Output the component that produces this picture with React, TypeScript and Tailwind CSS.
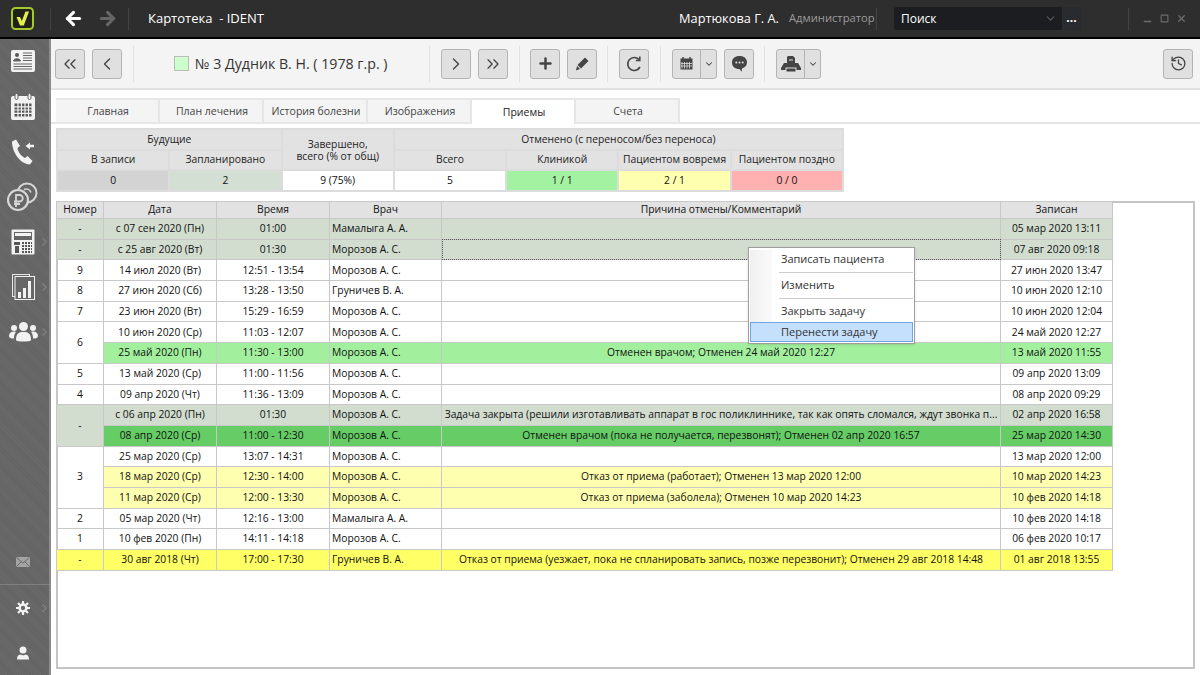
import { ChevronDown, ChevronLeft, ChevronRight, ChevronsLeft, ChevronsRight, Plus, History, ArrowLeft, ArrowRight, X, Minus, Square } from "lucide-react"
import type { ReactNode } from "react"

const Sep = ({ className = "" }: { className?: string }) => (
  <div className={"w-px h-9 bg-[#e2e2e2] shrink-0 " + className}></div>
)

const Btn = ({ children, className = "" }: { children: ReactNode; className?: string }) => (
  <div className={"w-[30px] h-[30px] shrink-0 flex items-center justify-center bg-[#e0e0e0] border border-[#b4b4b4] rounded-[3px] text-[#444] " + className}>
    {children}
  </div>
)

const SplitBtn = ({ children, className = "" }: { children: ReactNode; className?: string }) => (
  <div className={"w-[45px] h-[30px] shrink-0 flex bg-[#e0e0e0] border border-[#b4b4b4] rounded-[3px] text-[#444] " + className}>
    <div className="w-[28px] flex items-center justify-center border-r border-[#b4b4b4]">{children}</div>
    <div className="flex-1 flex items-center justify-center"><ChevronDown size={10} strokeWidth={2.5} /></div>
  </div>
)

const SideArrow = () => (
  <ChevronRight size={13} strokeWidth={3} className="absolute left-[38px] top-1/2 -translate-y-1/2 text-[#7c7c7c]" />
)

const SideItem = ({ children, arrow, className = "" }: { children: ReactNode; arrow?: boolean; className?: string }) => (
  <div className={"relative h-[45px] flex items-center justify-center pr-[3px] " + className}>
    {children}
    {arrow && <SideArrow />}
  </div>
)

const tabs = ["Главная", "План лечения", "История болезни", "Изображения", "Приемы", "Счета"]

type Row = {
  num?: string
  span?: number
  date: string
  time: string
  doc: string
  note?: string
  rec: string
  bg?: string
  focus?: boolean
}

const GREY = "bg-[#d2ddd0]"
const LGREEN = "bg-[#a2f09e]"
const DGREEN = "bg-[#66cc66]"
const LYEL = "bg-[#ffffb0]"
const YEL = "bg-[#ffff66]"

const rows: Row[] = [
  { num: "-", date: "с 07 сен 2020 (Пн)", time: "01:00", doc: "Мамалыга А. А.", rec: "05 мар 2020 13:11", bg: GREY },
  { num: "-", date: "с 25 авг 2020 (Вт)", time: "01:30", doc: "Морозов А. С.", rec: "07 авг 2020 09:18", bg: GREY, focus: true },
  { num: "9", date: "14 июл 2020 (Вт)", time: "12:51 - 13:54", doc: "Морозов А. С.", rec: "27 июн 2020 13:47" },
  { num: "8", date: "27 июн 2020 (Сб)", time: "13:28 - 13:50", doc: "Груничев В. А.", rec: "10 июн 2020 12:10" },
  { num: "7", date: "23 июн 2020 (Вт)", time: "15:29 - 16:59", doc: "Морозов А. С.", rec: "10 июн 2020 12:04" },
  { num: "6", span: 2, date: "10 июн 2020 (Ср)", time: "11:03 - 12:07", doc: "Морозов А. С.", rec: "24 май 2020 12:27" },
  { date: "25 май 2020 (Пн)", time: "11:30 - 13:00", doc: "Морозов А. С.", note: "Отменен врачом; Отменен 24 май 2020 12:27", rec: "13 май 2020 11:55", bg: LGREEN },
  { num: "5", date: "13 май 2020 (Ср)", time: "11:00 - 11:56", doc: "Морозов А. С.", rec: "09 апр 2020 13:09" },
  { num: "4", date: "09 апр 2020 (Чт)", time: "11:36 - 13:09", doc: "Морозов А. С.", rec: "08 апр 2020 09:29" },
  { num: "-", span: 2, date: "с 06 апр 2020 (Пн)", time: "01:30", doc: "Морозов А. С.", note: "Задача закрыта (решили изготавливать аппарат в гос поликлиннике, так как опять сломался, ждут звонка п...", rec: "02 апр 2020 16:58", bg: GREY },
  { date: "08 апр 2020 (Ср)", time: "11:00 - 12:30", doc: "Морозов А. С.", note: "Отменен врачом (пока не получается, перезвонят); Отменен 02 апр 2020 16:57", rec: "25 мар 2020 14:30", bg: DGREEN },
  { num: "3", span: 3, date: "25 мар 2020 (Ср)", time: "13:07 - 14:31", doc: "Морозов А. С.", rec: "13 мар 2020 12:00" },
  { date: "18 мар 2020 (Ср)", time: "12:30 - 14:00", doc: "Морозов А. С.", note: "Отказ от приема (работает); Отменен 13 мар 2020 12:00", rec: "10 мар 2020 14:23", bg: LYEL },
  { date: "11 мар 2020 (Ср)", time: "12:00 - 13:30", doc: "Морозов А. С.", note: "Отказ от приема (заболела); Отменен 10 мар 2020 14:23", rec: "10 фев 2020 14:18", bg: LYEL },
  { num: "2", date: "05 мар 2020 (Чт)", time: "12:16 - 13:00", doc: "Мамалыга А. А.", rec: "10 фев 2020 14:18" },
  { num: "1", date: "10 фев 2020 (Пн)", time: "14:11 - 14:18", doc: "Морозов А. С.", rec: "06 фев 2020 10:17" },
  { num: "-", date: "30 авг 2018 (Чт)", time: "17:00 - 17:30", doc: "Груничев В. А.", note: "Отказ от приема (уезжает, пока не спланировать запись, позже перезвонит); Отменен 29 авг 2018 14:48", rec: "01 авг 2018 13:55", bg: YEL },
]

const th = "border border-[#c8c8c8] bg-[#e2e2e2] font-normal text-center px-0 text-[#111]"
const td = "border border-[#c8c8c8] text-center px-0 overflow-hidden whitespace-nowrap text-[#111]"
const st = "border-2 border-[#dcdcdc] bg-[#e2e2e2] font-normal text-center text-[#222]"
const sv = "border-2 border-[#dcdcdc] text-center text-[#111]"

export default function App() {
  return (
    <div className="w-[1200px] h-[675px] overflow-hidden flex flex-col bg-white text-[#222] font-['Open_Sans',sans-serif]">
      <header className="relative h-[39px] shrink-0 flex items-center bg-[#2e2e2e] border-b-2 border-black text-white">
        <div className="w-[50px] flex justify-center -translate-x-[3px]">
          <svg width="23" height="23" viewBox="0 0 23 23">
            <rect x="1" y="1" width="21" height="21" rx="3.500" fill="#20221a" stroke="#a5c82d" strokeWidth="2" />
            <path d="M5.500 10h3.500l1.800 4 3.700-9.500h3.500L12.800 18.500H9z" fill="#e4f04e" />
          </svg>
        </div>
        <div className="w-px h-[22px] bg-[#444]"></div>
        <ArrowLeft size={21} strokeWidth={3.5} className="ml-[12px] text-white" />
        <ArrowRight size={21} strokeWidth={3.5} className="ml-[13px] text-[#666]" />
        <div className="w-px h-[22px] bg-[#444] ml-[10px]"></div>
        <div className="ml-[19px] text-[13px]">Картотека&nbsp; - IDENT</div>
        <div className="ml-auto text-[12.800px] font-medium">Мартюкова Г. А.</div>
        <div className="ml-[10px] text-[11.200px] text-[#9c9c9c] w-[87px] whitespace-nowrap">Администратор</div>
        <div className="w-px h-[22px] bg-[#444]"></div>
        <div className="ml-[17px] w-[187px] h-[23px] flex rounded-[3px] bg-[#1c1d20]">
          <div className="flex-1 flex items-center justify-between pl-[7px] pr-[5px] text-[12px]">
            <span>Поиск</span>
            <ChevronDown size={13} className="text-[#5c5c5c]" />
          </div>
          <div className="w-[19px] bg-[#2a2b2e] rounded-r-[3px] text-[12px] font-bold text-center leading-[22px]">...</div>
        </div>
        <div className="w-px h-[22px] bg-[#444] ml-[47px]"></div>
        <div className="flex items-center gap-[7px] ml-[13px] mr-[13px] text-[#6c6c6c]">
          <Minus size={11} strokeWidth={3} className="translate-y-[3px]" />
          <Square size={9} strokeWidth={3} />
          <X size={11} strokeWidth={3} />
        </div>
      </header>

      <div className="flex-1 flex min-h-0">
        <aside className="w-[51px] shrink-0 flex flex-col bg-[repeating-linear-gradient(45deg,#6a6a6a_0px,#6a6a6a_1px,#636363_1px,#636363_2px)] border-r-2 border-[#8c8c8c]">
          <SideItem>
            <svg width="26" height="24" viewBox="0 0 26 24" className="-translate-y-[1px]">
              <rect x="1" y="1" width="24" height="22" rx="2" fill="#f2f2f2" />
              <circle cx="7" cy="6" r="2" fill="#555" />
              <path d="M3.5 12c0-3 7-3 7 0zM13 4h9M13 6.5h9M13 9h9M13 11.5h9M3.5 15h18.500M3.500 17.500h18.500M3.500 20h18.500" fill="#555" stroke="#666" strokeWidth="1" />
            </svg>
          </SideItem>
          <SideItem>
            <svg width="26" height="28" viewBox="0 0 26 28">
              <rect x="1" y="3" width="24" height="24" rx="2" fill="#f2f2f2" />
              <rect x="5" y="0.500" width="3" height="6" rx="1.500" fill="#f2f2f2" stroke="#666" />
              <rect x="18" y="0.500" width="3" height="6" rx="1.500" fill="#f2f2f2" stroke="#666" />
              <path d="M4.500 10.500h17v13h-17z" fill="#555" />
              <path d="M8 10v14M11.500 10v14M15 10v14M18.500 10v14M4 13.800h18M4 17h18M4 20.300h18" stroke="#f2f2f2" strokeWidth="1.200" />
            </svg>
          </SideItem>
          <SideItem>
            <svg width="24" height="26" viewBox="0 0 24 26">
              <path d="M1 2.500 5 0.500 9 7 6.500 9c.5 4 4 8.500 7.500 10l2.500-2 5 5-2.500 3.500C10 25.500 1 14 1 2.500z" fill="#f2f2f2" />
              <path d="M23 7h-5" stroke="#f2f2f2" strokeWidth="2.500" />
              <path d="M19 3.500 14.500 7l4.500 3.500z" fill="#f2f2f2" />
            </svg>
          </SideItem>
          <SideItem>
            <svg width="32" height="30" viewBox="0 0 32 30" fill="none" stroke="#d6d6d6">
              <circle cx="20" cy="11" r="9.500" strokeWidth="2" />
              <path d="M17 7.500a5 5 0 0 1 7 3" strokeWidth="1.500" />
              <circle cx="11" cy="18" r="10" fill="#676767" strokeWidth="2.200" />
              <path d="M9 25v-12h3.500a3 3 0 0 1 0 6.500H7M7 22h6" strokeWidth="1.800" />
            </svg>
          </SideItem>
          <SideItem arrow>
            <svg width="24" height="26" viewBox="0 0 24 26">
              <rect x="0.500" y="0.500" width="23" height="25" rx="1" fill="#f2f2f2" />
              <rect x="3" y="3" width="18" height="8" fill="#666" />
              <rect x="4" y="4" width="16" height="3" fill="#f2f2f2" />
              <rect x="3" y="13" width="6" height="3" fill="#555" />
              <rect x="4" y="17" width="4" height="7" fill="#555" />
              <path d="M11 14h10M11 17h10M11 20h10M11 23h10" stroke="#555" strokeWidth="2" strokeDasharray="2 1" />
            </svg>
          </SideItem>
          <SideItem arrow>
            <svg width="23" height="26" viewBox="0 0 23 26">
              <rect x="0.500" y="0.500" width="17" height="22" fill="none" stroke="#e8e8e8" />
              <rect x="3" y="2.500" width="19.500" height="23" fill="#676767" stroke="#f2f2f2" />
              <rect x="6" y="18" width="3" height="6" fill="#f2f2f2" />
              <rect x="11" y="14" width="3" height="10" fill="#f2f2f2" />
              <rect x="16" y="7" width="3" height="17" fill="#f2f2f2" />
            </svg>
          </SideItem>
          <SideItem arrow>
            <svg width="29" height="20" viewBox="0 0 29 20" fill="#f2f2f2">
              <circle cx="14.500" cy="4.500" r="4.500" />
              <circle cx="5" cy="6" r="3" />
              <circle cx="24" cy="6" r="3" />
              <path d="M7 18c0-7 3-8 7.500-8s7.500 1 7.500 8c0 2-15 2-15 0z" />
              <path d="M0 14c0-3 2-4.500 5-4.500 1 0 1.500.2 2 .5-1.500 1.500-2 3.500-2 6.500C2 16.500 0 16 0 14zM29 14c0-3-2-4.500-5-4.500-1 0-1.500.2-2 .5 1.500 1.500 2 3.500 2 6.500 3 0 5-.500 5-2.500z" />
            </svg>
          </SideItem>
          <SideItem className="mt-auto">
            <svg width="14" height="10" viewBox="0 0 14 10">
              <rect width="14" height="10" rx="1" fill="#a4a4a4" />
              <path d="M0.500 0.500 7 6l6.500-5.500M0.500 9.500 5 5M13.500 9.500 9 5" stroke="#676767" fill="none" />
            </svg>
          </SideItem>
          <div className="h-px bg-[#808080]"></div>
          <SideItem arrow>
            <svg width="14" height="14" viewBox="0 0 14 14">
              <circle cx="7" cy="7" r="3.400" fill="none" stroke="#f2f2f2" strokeWidth="2.500" />
              <path d="M7 0v3M7 11v3M0 7h3M11 7h3M2 2l2 2M10 10l2 2M12 2l-2 2M4 10l-2 2" stroke="#f2f2f2" strokeWidth="2.200" />
            </svg>
          </SideItem>
          <SideItem>
            <svg width="12" height="14" viewBox="0 0 12 14" fill="#f2f2f2">
              <circle cx="6" cy="4" r="3.500" />
              <path d="M0 13.500c0-3 1-4.500 3.500-5 .8 1 4.200 1 5 0 2.500.5 3.500 2 3.500 5z" />
            </svg>
          </SideItem>
        </aside>

        <main className="flex-1 min-w-0 flex flex-col">
          <div className="h-[51px] shrink-0 flex items-center pl-1 pr-[7px] bg-[#f4f4f4] border-b-2 border-[#e2e2e2]">
            <Btn><ChevronsLeft size={20} strokeWidth={1.600} /></Btn>
            <Btn className="ml-[7px]"><ChevronLeft size={20} strokeWidth={1.600} /></Btn>
            <Sep className="ml-[11px]" />
            <div className="w-[15px] h-[15px] ml-[40px] shrink-0 bg-[#ccffcc] border border-[#bbb]"></div>
            <div className="ml-[6px] w-[234px] text-[14.200px] text-[#333] whitespace-nowrap">№ 3 Дудник В. Н. ( 1978 г.р. )</div>
            <Sep />
            <Btn className="ml-[11px]"><ChevronRight size={20} strokeWidth={1.600} /></Btn>
            <Btn className="ml-[7px]"><ChevronsRight size={20} strokeWidth={1.600} /></Btn>
            <Sep className="ml-[11px]" />
            <Btn className="ml-[10px]"><Plus size={17} strokeWidth={3.500} /></Btn>
            <Btn className="ml-[7px]">
              <svg width="16" height="16" viewBox="0 0 16 16" fill="#444">
                <path d="M11 1.500 14.500 5 7 12.500 3.500 9z" />
                <path d="M3 10l3 3-4 1.500z" />
              </svg>
            </Btn>
            <Sep className="ml-[10px]" />
            <Btn className="ml-[11px]">
              <svg width="18" height="18" viewBox="0 0 18 18" fill="none" stroke="#444" strokeWidth="1.600">
                <path d="M14 4.500A6.500 6.500 0 1 0 15 12" />
                <path d="M14.800 1.500v4h-4" />
              </svg>
            </Btn>
            <Sep className="ml-[11px]" />
            <SplitBtn className="ml-[11px]">
              <svg width="13" height="13" viewBox="0 0 13 13">
                <rect x="0.500" y="1.500" width="12" height="11" fill="#444" />
                <path d="M3 0v3M10 0v3" stroke="#444" strokeWidth="1.500" />
                <path d="M2 5v6.500M4.500 5v6.500M7 5v6.500M9.500 5v6.500M1 6.500h11M1 9h11" stroke="#e0e0e0" strokeWidth="0.800" />
              </svg>
            </SplitBtn>
            <Btn className="ml-[7px]">
              <svg width="17" height="17" viewBox="0 0 17 17">
                <path d="M8.500 1C4 1 1 3.500 1 7.500S4 14 8 14c1 0 1.500 2 3 2.500-.300-1-.300-2 0-3 3-1 5-3 5-6C16 3.500 13 1 8.500 1z" fill="#444" />
                <circle cx="5.300" cy="7.500" r="1" fill="#e0e0e0" />
                <circle cx="8.500" cy="7.500" r="1" fill="#e0e0e0" />
                <circle cx="11.700" cy="7.500" r="1" fill="#e0e0e0" />
              </svg>
            </Btn>
            <Sep className="ml-[10px]" />
            <SplitBtn className="ml-[11px]">
              <svg width="20" height="16" viewBox="0 0 20 16" fill="#444">
                <path d="M7 0h5l2 2v5H6V1z" />
                <path d="M8 4h4" stroke="#e0e0e0" />
                <path d="M3 7h14l3 5v2H0v-2z" />
                <rect x="5" y="12" width="10" height="4" fill="#444" stroke="#e0e0e0" />
              </svg>
            </SplitBtn>
            <Btn className="ml-auto"><History size={17} strokeWidth={1.800} /></Btn>
          </div>

          <div className="h-[34px] shrink-0 flex items-end pl-[5px] border-b-2 border-[#e4e4e4] text-[10.500px]">
            {tabs.map((t, i) => (
              <div
                key={t}
                className={
                  "w-[104px] h-[26px] -mb-[2px] pt-[2px] pl-[2px] flex items-center justify-center border-t-2 border-r-2 border-[#e6e6e6] " +
                  (i === 4 ? "bg-white text-[#222]" : "bg-[#f4f4f4] text-[#444] border-b-2")
                }
              >
                {t}
              </div>
            ))}
          </div>

          <div className="flex-1 min-h-0 pl-[5px] pr-[5px] pt-[4px] pb-[6px] flex flex-col">
            <table className="table-fixed border-collapse w-[788px] text-[10.300px] shrink-0">
              <tbody>
                <tr className="h-[21px]">
                  <th colSpan={2} className={st}>Будущие</th>
                  <th rowSpan={2} className={st + " leading-[12px]"}>Завершено,<br />всего (% от общ)</th>
                  <th colSpan={4} className={st}>Отменено (с переносом/без переноса)</th>
                </tr>
                <tr className="h-[20px]">
                  <th className={st}>В записи</th>
                  <th className={st}>Запланировано</th>
                  <th className={st}>Всего</th>
                  <th className={st}>Клиникой</th>
                  <th className={st + " whitespace-nowrap"}>Пациентом вовремя</th>
                  <th className={st + " whitespace-nowrap"}>Пациентом поздно</th>
                </tr>
                <tr className="h-[21px]">
                  <td className={sv + " bg-[#d3d3d3]"}>0</td>
                  <td className={sv + " bg-[#d2dfd2]"}>2</td>
                  <td className={sv}>9 (75%)</td>
                  <td className={sv}>5</td>
                  <td className={sv + " bg-[#a2f2a2]"}>1 / 1</td>
                  <td className={sv + " bg-[#ffffb0]"}>2 / 1</td>
                  <td className={sv + " bg-[#ffb0b0]"}>0 / 0</td>
                </tr>
              </tbody>
            </table>

            <div className="relative flex-1 mt-[9px] border-2 border-[#c4c4c4] min-h-0">
              <table className="table-fixed border-collapse w-[1056px] text-[10.300px] -mt-[2px] -ml-[2px]">
                <colgroup>
                  <col className="w-[47px]" />
                  <col className="w-[113px]" />
                  <col className="w-[113px]" />
                  <col className="w-[112px]" />
                  <col className="w-[559px]" />
                  <col className="w-[112px]" />
                </colgroup>
                <thead>
                  <tr className="h-[17px]">
                    {["Номер", "Дата", "Время", "Врач", "Причина отмены/Комментарий", "Записан"].map((h) => (
                      <th key={h} className={th}>{h}</th>
                    ))}
                  </tr>
                </thead>
                <tbody>
                  {rows.map((r, i) => (
                    <tr key={i} className={"h-[20.700px] " + (r.bg ?? "")}>
                      {r.num !== undefined && <td rowSpan={r.span} className={td + " " + (r.bg ?? "")}>{r.num}</td>}
                      <td className={td}>{r.date}</td>
                      <td className={td}>{r.time}</td>
                      <td className={td + " text-left pl-[2px]"}>{r.doc}</td>
                      <td className={td + (r.focus ? " outline-1 outline-dotted -outline-offset-1 outline-[#555]" : "")}>{r.note ?? ""}</td>
                      <td className={td}>{r.rec}</td>
                    </tr>
                  ))}
                </tbody>
              </table>

              <div className="absolute left-[690px] top-[44px] w-[167px] h-[97px] bg-white border border-[#a0a0a0] shadow-sm text-[11px] text-[#333]">
                <div className="absolute left-[1px] top-[2px] bottom-[2px] w-[22px] bg-gradient-to-r from-[#f0f0f0] to-[#fafafa]"></div>
                <div className="relative h-[24px] pb-[1px] pl-[32px] flex items-center">Записать пациента</div>
                <div className="relative ml-[30px] mr-px h-px bg-[#ccc]"></div>
                <div className="relative h-[25px] pb-[1px] pl-[32px] flex items-center">Изменить</div>
                <div className="relative ml-[30px] mr-px h-px bg-[#ccc]"></div>
                <div className="relative h-[23px] pt-[1px] pl-[32px] flex items-center">Закрыть задачу</div>
                <div className="relative mx-[1px] h-[20px] pl-[30px] flex items-center bg-[#c4e0fc] border border-[#6ea8e0]">Перенести задачу</div>
              </div>
            </div>
          </div>
        </main>
      </div>
    </div>
  )
}
